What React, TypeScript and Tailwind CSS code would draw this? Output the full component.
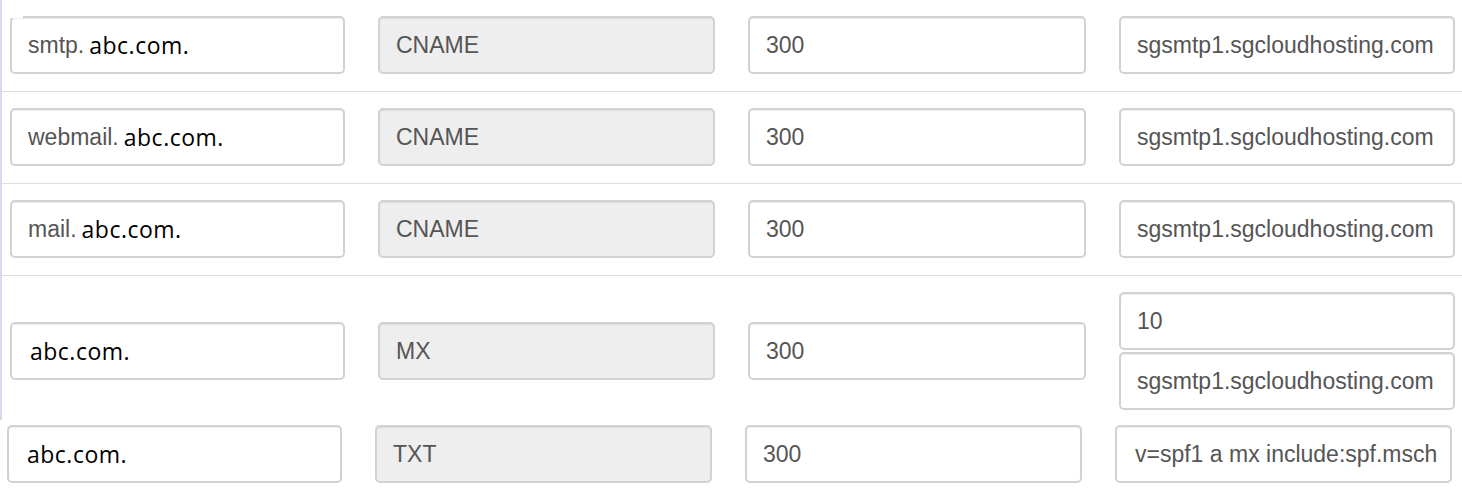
import React from "react";

type Rec = {
  host?: string;
  type: string;
  ttl: string;
  value: string[];
};

const records: Rec[] = [
  { host: "smtp.", type: "CNAME", ttl: "300", value: ["sgsmtp1.sgcloudhosting.com"] },
  { host: "webmail.", type: "CNAME", ttl: "300", value: ["sgsmtp1.sgcloudhosting.com"] },
  { host: "mail.", type: "CNAME", ttl: "300", value: ["sgsmtp1.sgcloudhosting.com"] },
  { type: "MX", ttl: "300", value: ["10", "sgsmtp1.sgcloudhosting.com"] },
];

const box =
  "h-[58px] rounded-[5px] border-2 border-[#d2d2d2] flex items-center px-[16px] overflow-hidden whitespace-nowrap text-[23px] text-[#555] shadow-[inset_0_1px_1px_rgba(0,0,0,0.075)]";

function Domain() {
  return (
    <span className="text-[23px] text-black tracking-[0.5px] font-['Open_Sans',sans-serif]">
      abc.com.
    </span>
  );
}

function HostBox({ host }: { host?: string }) {
  return (
    <div className={`${box} bg-white`}>
      {host ? <span className="mr-[5px]">{host}</span> : <span className="w-[2px]" />}
      <Domain />
    </div>
  );
}

function Row({ r, last }: { r: Rec; last?: boolean }) {
  return (
    <div
      className={`grid grid-cols-[335px_337px_338px_336px] gap-x-[33px] items-center pl-[8px] ${
        last ? "pt-[16px] pb-[10px]" : "pt-[16px] pb-[17px] border-b border-[#dedede]"
      }`}
    >
      <HostBox host={r.host} />
      <div className={`${box} bg-[#eeeeee]`}>{r.type}</div>
      <div className={`${box} bg-white`}>{r.ttl}</div>
      <div className="flex flex-col gap-[2px]">
        {r.value.map((v) => (
          <div key={v} className={`${box} bg-white`}>
            {v}
          </div>
        ))}
      </div>
    </div>
  );
}

export default function App() {
  return (
    <div className="relative w-[1462px] h-[494px] bg-white overflow-hidden font-['Liberation_Sans',Arial,sans-serif]">
      <div className="h-[420px] border-l-2 border-[#d4dbe9]">
        {records.map((r, i) => (
          <Row key={i} r={r} last={i === records.length - 1} />
        ))}
      </div>

      {/* TXT row, pasted in a little further left */}
      <div className="grid grid-cols-[335px_337px_337px_337px] gap-x-[33px] pl-[7px] pt-[5px]">
        <HostBox />
        <div className={`${box} bg-[#eeeeee]`}>TXT</div>
        <div className={`${box} bg-white`}>300</div>
        <div className={`${box} bg-white pl-[18px]`}>v=spf1 a mx include:spf.msch</div>
      </div>

      {/* crop artifact at the first field's corner */}
      <div className="absolute left-[9px] top-[14px] w-[14px] h-[4px] bg-white" />
    </div>
  );
}
